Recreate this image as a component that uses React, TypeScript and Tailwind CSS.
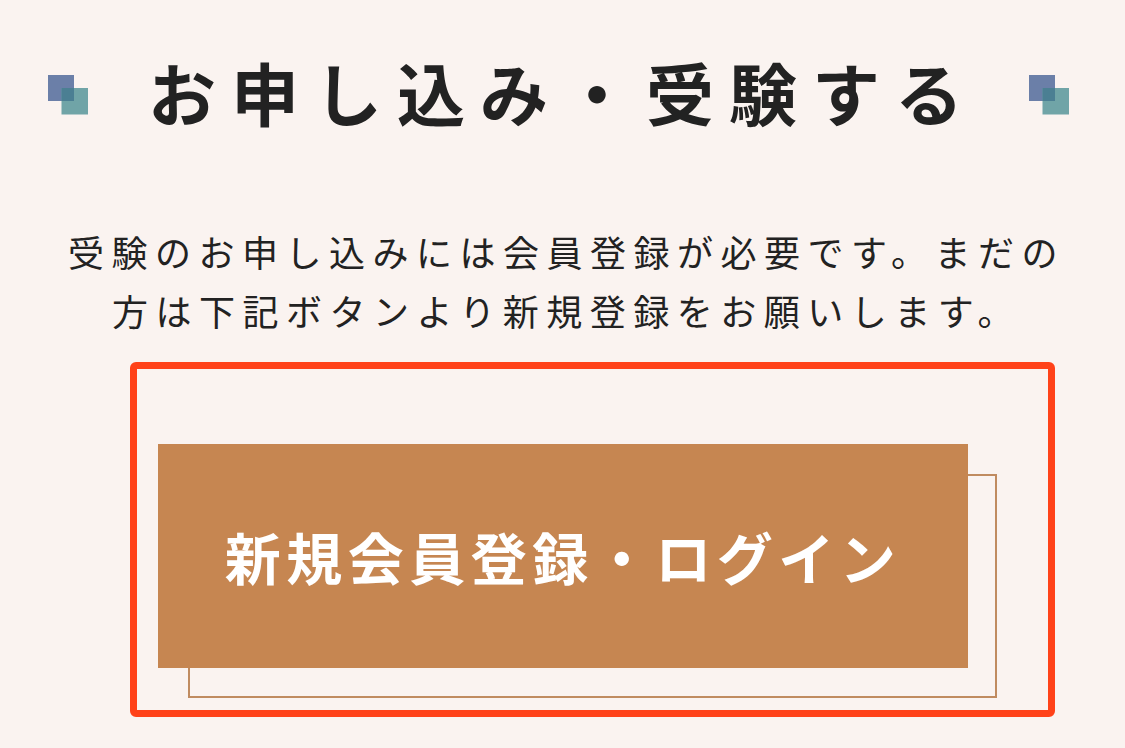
import React from 'react';

function Deco() {
  return (
    <svg width="40" height="40" viewBox="0 0 40 40" className="shrink-0">
      <rect x="0" y="0" width="26" height="26" fill="#6b7fa8" />
      <rect x="13.5" y="13" width="26.5" height="26.5" fill="#70a4a7" />
      <rect x="13.5" y="13" width="12.5" height="13" fill="#4b7f93" />
    </svg>
  );
}

export default function App() {
  return (
    <div className="min-h-[748px] w-full bg-[#faf3f0] text-[#222222] font-['Noto_Sans_CJK_JP','Noto_Sans',sans-serif]">
      <div className="flex items-center pl-[48px] pt-[58px]">
        <div className="mt-[6px]">
          <Deco />
        </div>
        <h2 className="ml-[60px] mr-[51px] text-[68px] leading-[68px] font-bold tracking-[15px] whitespace-nowrap">
          お申し込み・受験する
        </h2>
        <div className="mt-[6px]">
          <Deco />
        </div>
      </div>

      <p className="mt-[96px] text-center text-[36px] leading-[59px] tracking-[7.5px] pl-[8px]">
        受験のお申し込みには会員登録が必要です。まだの
        <br />
        方は下記ボタンより新規登録をお願いします。
      </p>

      <div className="ml-[130px] mt-[22px] h-[355px] w-[925px] rounded-[6px] border-[7px] border-[#ff4219] pl-[21px] pt-[75px]">
        <div className="relative h-[224px] w-[810px]">
          <div className="absolute left-[30px] top-[30px] h-[224px] w-[809px] border-2 border-[#c08b60]" />
          <button className="relative flex h-full w-full items-center justify-center bg-[#c68651] text-[56px] font-bold leading-none tracking-[5.5px] text-white">
            新規会員登録・ログイン
          </button>
        </div>
      </div>
    </div>
  );
}
